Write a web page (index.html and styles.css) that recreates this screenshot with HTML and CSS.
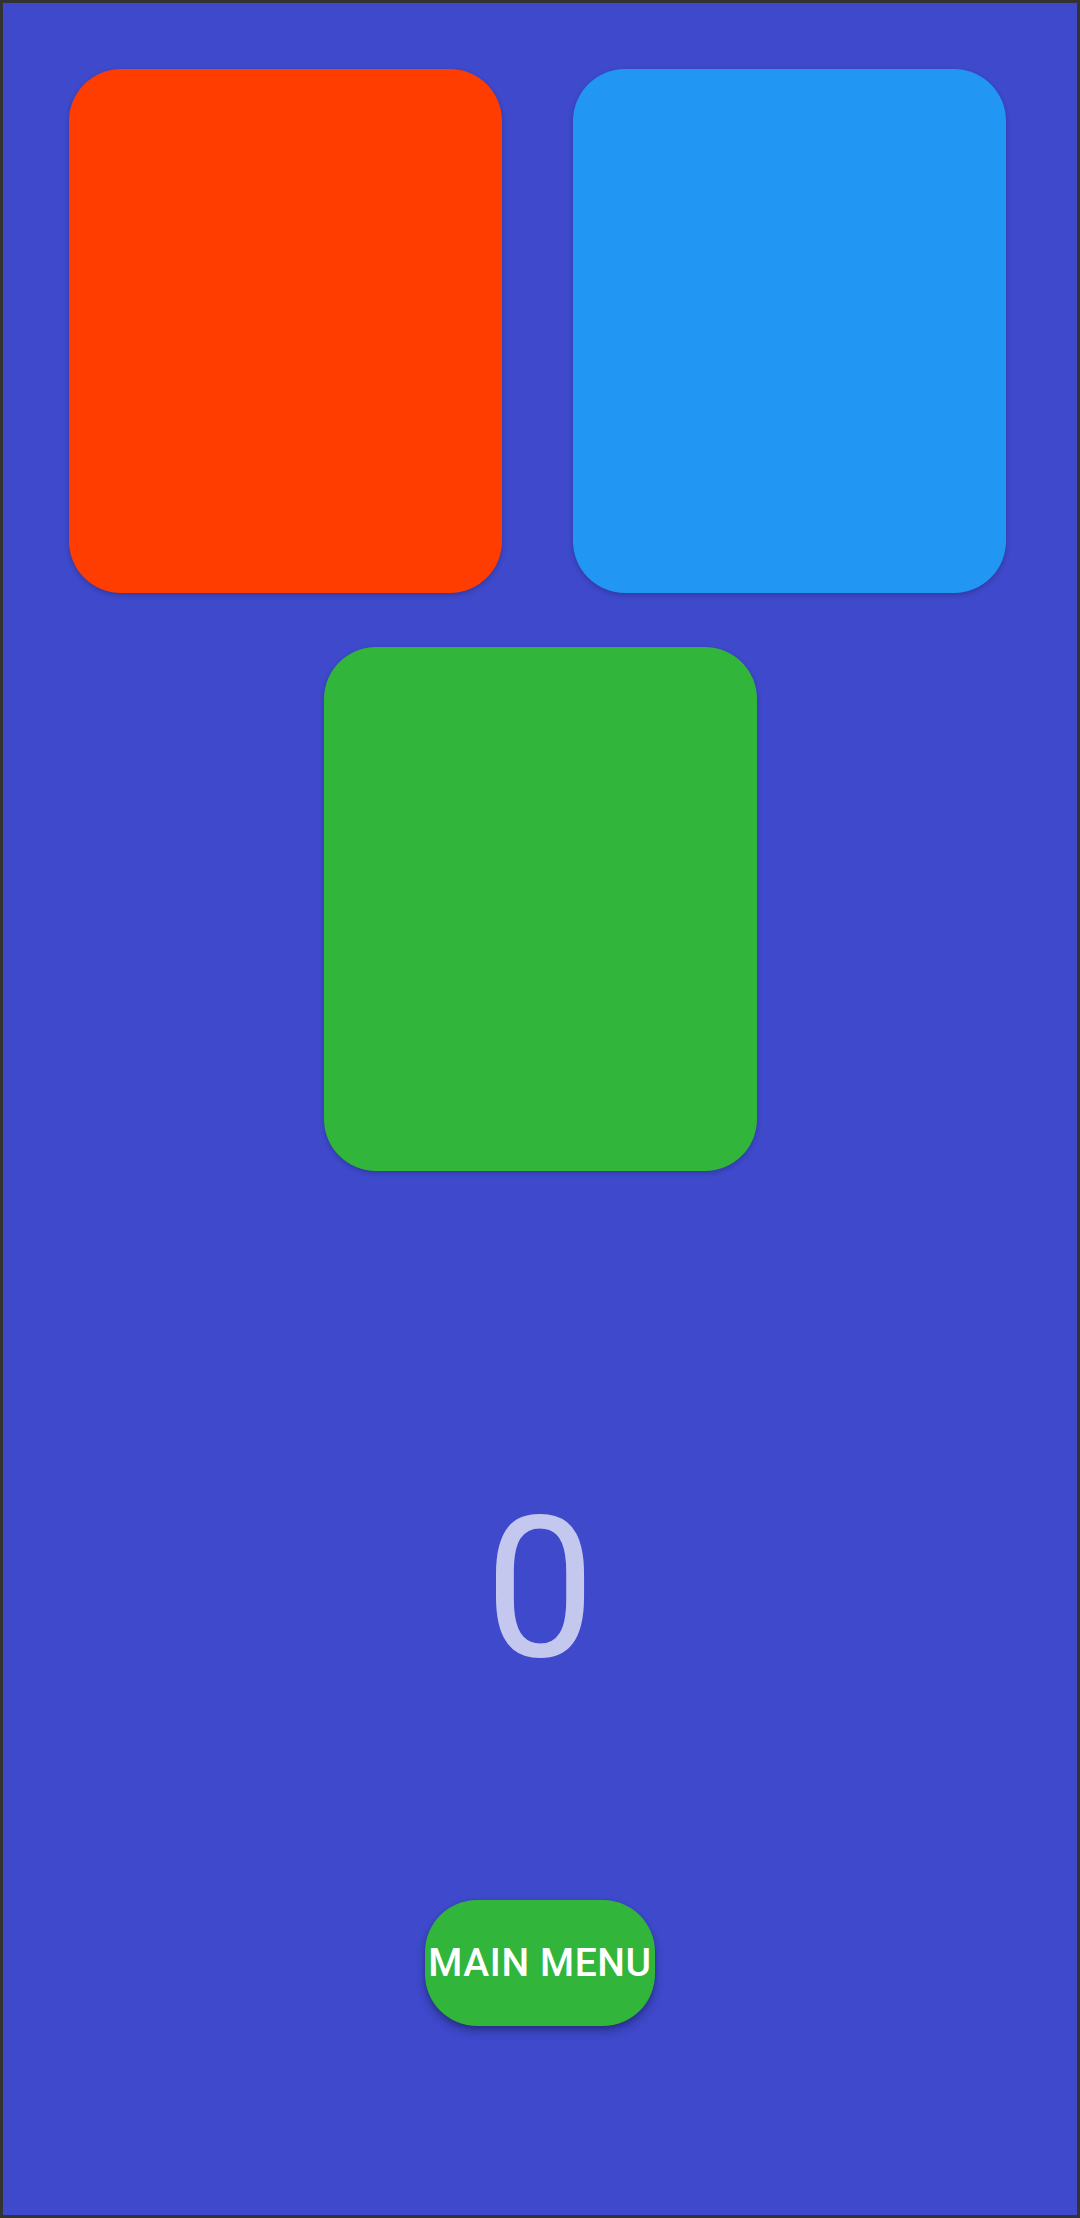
FILE: index.html
```html
<!DOCTYPE html>
<html>
<head>
<meta charset="utf-8">
<link rel="stylesheet" href="styles.css">
</head>
<body>
<div class="screen">
  <div class="row top-row">
    <div class="card red"></div>
    <div class="card blue"></div>
  </div>
  <div class="row mid-row">
    <div class="card green"></div>
  </div>
  <div class="score">0</div>
  <div class="btn-row">
    <button class="menu-btn">MAIN MENU</button>
  </div>
</div>
</body>
</html>
```
FILE: styles.css
```css
html, body {
  margin: 0;
  padding: 0;
}
.screen {
  box-sizing: border-box;
  width: 1080px;
  height: 2218px;
  border: 3px solid #333333;
  background: #3e49cc;
  display: flex;
  flex-direction: column;
  font-family: Roboto, "Noto Sans", sans-serif;
  overflow: hidden;
}
.row {
  display: flex;
}
.top-row {
  padding: 66px 0 0 66px;
  gap: 71px;
}
.mid-row {
  margin-top: 54px;
  justify-content: center;
  padding-left: 1px;
}
.card {
  width: 433px;
  height: 524px;
  border-radius: 52px;
  box-shadow: 0 2px 5px rgba(0, 0, 0, 0.22);
}
.red { background: #ff3d00; }
.blue { background: #2196f3; }
.green { background: #31b53a; }
.score {
  margin-top: 320px;
  text-align: center;
  font-size: 196px;
  line-height: 1;
  height: 196px;
  color: #c5c8ee;
  font-weight: 400;
}
.btn-row {
  margin-top: 213px;
  display: flex;
  justify-content: center;
}
.menu-btn {
  width: 230px;
  height: 126px;
  border: none;
  border-radius: 52px;
  background: #31b53a;
  color: #ffffff;
  font-family: Roboto, "Noto Sans", sans-serif;
  font-weight: 500;
  font-size: 39px;
  letter-spacing: 0.6px;
  padding: 0;
  white-space: nowrap;
  display: flex;
  align-items: center;
  justify-content: center;
  box-shadow: 0 6px 10px rgba(0, 0, 0, 0.24), 0 2px 4px rgba(0, 0, 0, 0.18);
}
```
